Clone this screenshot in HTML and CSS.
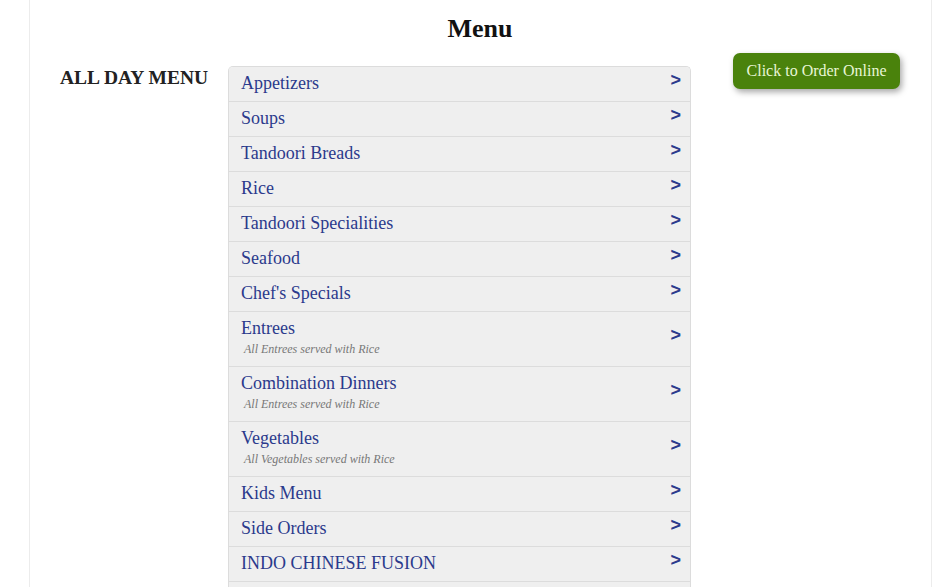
FILE: index.html
```html
<!DOCTYPE html>
<html>
<head>
<meta charset="utf-8">
<link rel="stylesheet" href="styles.css">
</head>
<body>
<div class="page">
  <h1 class="title">Menu</h1>
  <div class="layout">
    <div class="label">ALL DAY MENU</div>
    <div class="list">
      <div class="row"><div class="name">Appetizers</div><span class="arrow">&gt;</span></div>
      <div class="row"><div class="name">Soups</div><span class="arrow">&gt;</span></div>
      <div class="row"><div class="name">Tandoori Breads</div><span class="arrow">&gt;</span></div>
      <div class="row"><div class="name">Rice</div><span class="arrow">&gt;</span></div>
      <div class="row"><div class="name">Tandoori Specialities</div><span class="arrow">&gt;</span></div>
      <div class="row"><div class="name">Seafood</div><span class="arrow">&gt;</span></div>
      <div class="row"><div class="name">Chef's Specials</div><span class="arrow">&gt;</span></div>
      <div class="row tall"><div class="name">Entrees<div class="sub">All Entrees served with Rice</div></div><span class="arrow">&gt;</span></div>
      <div class="row tall"><div class="name">Combination Dinners<div class="sub">All Entrees served with Rice</div></div><span class="arrow">&gt;</span></div>
      <div class="row tall"><div class="name">Vegetables<div class="sub">All Vegetables served with Rice</div></div><span class="arrow">&gt;</span></div>
      <div class="row"><div class="name">Kids Menu</div><span class="arrow">&gt;</span></div>
      <div class="row"><div class="name">Side Orders</div><span class="arrow">&gt;</span></div>
      <div class="row"><div class="name">INDO CHINESE FUSION</div><span class="arrow">&gt;</span></div>
      <div class="row end"></div>
    </div>
    <div class="order"><a class="btn" href="#">Click to Order Online</a></div>
  </div>
</div>
</body>
</html>
```

FILE: styles.css
```css
html, body {
  margin: 0;
  padding: 0;
  background: #ffffff;
}
body {
  font-family: "Liberation Serif", "Times New Roman", serif;
  overflow: hidden;
  height: 587px;
}
.page {
  margin: 0 13px 0 29px;
  border-left: 1px solid #ececec;
  border-right: 1px solid #ececec;
  padding: 0 31px 0 30px;
  height: 587px;
  overflow: hidden;
  box-sizing: border-box;
}
.title {
  margin: 0;
  padding-top: 12px;
  font-size: 26px;
  line-height: 34px;
  font-weight: bold;
  text-align: center;
  color: #111;
}
.layout {
  display: flex;
  align-items: flex-start;
  margin-top: 7px;
}
.label {
  width: 168px;
  margin-top: 13px;
  font-size: 19.5px;
  line-height: 23px;
  font-weight: bold;
  color: #222;
  white-space: nowrap;
}
.list {
  width: 463px;
  margin-top: 13px;
  border: 1px solid #dcdcdc;
  border-bottom: none;
  border-radius: 5px 5px 0 0;
  box-sizing: border-box;
  overflow: hidden;
}
.row {
  display: flex;
  align-items: center;
  justify-content: space-between;
  height: 35px;
  box-sizing: border-box;
  background: #efefef;
  border-bottom: 1px solid #dcdcdc;
  padding: 0 9px 0 12px;
}
.row.tall { height: 55px; }
.row.end { height: 6px; border-bottom: none; }
.name {
  font-size: 18px;
  line-height: 22px;
  color: #2b3a8c;
  padding-bottom: 2px;
}
.tall .name { padding-bottom: 0; line-height: 21px; }
.sub {
  font-family: "Liberation Serif", serif;
  font-style: italic;
  font-size: 12px;
  line-height: 21px;
  color: #777;
  padding-left: 3px;
}
.arrow {
  font-family: "Liberation Sans", Arial, sans-serif;
  font-weight: bold;
  font-size: 18px;
  color: #2b3a8c;
  margin-bottom: 8px;
}
.order {
  flex: 1;
  display: flex;
  justify-content: flex-end;
}
.btn {
  display: block;
  width: 167px;
  height: 36px;
  box-sizing: border-box;
  background: #4a820c;
  color: #e8f6d6;
  text-decoration: none;
  font-size: 16px;
  line-height: 36px;
  text-align: center;
  border-radius: 7px;
  box-shadow: 2px 3px 6px rgba(0, 0, 0, 0.35);
}
```
